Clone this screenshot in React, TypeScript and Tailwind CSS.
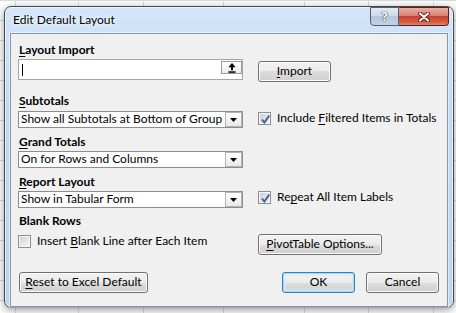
import React from "react";

type BtnProps = {
  children: React.ReactNode;
  className?: string;
  isDefault?: boolean;
};

function WinButton({ children, className = "", isDefault = false }: BtnProps) {
  return (
    <button
      type="button"
      className={`flex h-[21px] items-center justify-center rounded-[3px] border pb-[2px] text-[12px] leading-[15px] text-black bg-[linear-gradient(#f2f2f2_0%,#ebebeb_50%,#dddddd_50%,#cfcfcf_100%)] ${
        isDefault
          ? "border-[#3c7fb1] shadow-[inset_0_0_0_1px_#9edbf7,inset_0_0_3px_2px_#d4effc]"
          : "border-[#707070] shadow-[inset_0_0_0_1px_#fbfbfb]"
      } ${className}`}
    >
      {children}
    </button>
  );
}

function Select({ value }: { value: string }) {
  return (
    <div className="flex h-[17px] w-[225px] shrink-0 border border-[#8d8d8d] bg-white">
      <span className="-mt-[1px] flex-1 whitespace-nowrap pl-[2px] leading-[15px]">{value}</span>
      <div className="flex w-[17px] items-end justify-center border border-[#b3b3b3] bg-[linear-gradient(#ffffff,#e8e8e8)] pb-[4px]">
        <svg width="7" height="4" viewBox="0 0 7 4">
          <path d="M0 0H7L3.5 4Z" fill="#000" />
        </svg>
      </div>
    </div>
  );
}

function Check({ checked = false }: { checked?: boolean }) {
  return (
    <div className="relative flex h-[13px] w-[13px] shrink-0 items-center justify-center border border-[#8e8f8f] bg-[#f6f6f6]">
      <div
        className={`h-[9px] w-[9px] ${
          checked
            ? "bg-[linear-gradient(135deg,#c9d2dd,#eef1f5)]"
            : "bg-[linear-gradient(135deg,#cdd2d8,#f7f7f7)]"
        }`}
      />
      {checked && (
        <svg className="absolute left-[1px] top-[1px]" width="11" height="11" viewBox="0 0 11 11">
          <path d="M2 5.5L4.3 8.6L9.3 1.6" fill="none" stroke="#4a5f97" strokeWidth="1.9" />
        </svg>
      )}
    </div>
  );
}

export default function App() {
  return (
    <div className="relative h-[313px] w-[456px] overflow-hidden bg-white bg-[linear-gradient(#dadcdd_1px,transparent_1px)] bg-[length:100%_20px] pl-[4px] pt-[6px] font-['Lato','Noto_Sans',sans-serif] text-black">
      {/* sheet columns behind the dialog */}
      <div className="absolute bottom-0 left-[15px] top-0 w-px bg-[#dadcdd]" />
      <div className="absolute bottom-0 left-[78px] top-0 w-px bg-[#dadcdd]" />
      <div className="absolute bottom-0 left-[143px] top-0 w-px bg-[#dadcdd]" />
      <div className="absolute bottom-0 left-[223px] top-0 w-px bg-[#dadcdd]" />
      <div className="absolute bottom-0 left-[304px] top-0 w-px bg-[#dadcdd]" />
      <div className="absolute bottom-0 left-[368px] top-0 w-px bg-[#dadcdd]" />
      <div className="absolute bottom-0 left-[433px] top-0 w-px bg-[#dadcdd]" />

      <div className="relative z-10 flex h-[302px] w-[450px] flex-col rounded-[7px] border border-[#3f4a56] bg-[linear-gradient(180deg,#d4e6f8_0%,#c2d9f1_35%,#bcd4ed_100%)] shadow-[0_2px_8px_rgba(0,0,0,0.4),inset_0_0_0_1px_rgba(255,255,255,0.6)]">
        {/* title bar */}
        <div className="flex h-[26px] items-start pl-[8px] pr-[4px]">
          <span className="mt-[5px] text-[12px] leading-[15px] [text-shadow:0_0_6px_#fff,0_0_3px_#fff]">
            Edit Default Layout
          </span>
          <div className="ml-auto flex">
            <div className="flex h-[19px] w-[29px] items-center justify-center rounded-bl-[4px] border border-[#4d5f75] bg-[linear-gradient(#e3ebf4_0%,#cfdbe8_45%,#b6c7da_50%,#c3d3e5_100%)] pb-[1px] font-['Noto_Sans',sans-serif] text-[13px] font-bold leading-none text-white [text-shadow:0_0_1px_#2f4054,0_0_1px_#2f4054,0_0_1px_#2f4054]">
              ?
            </div>
            <div className="flex h-[19px] w-[50px] items-center justify-center rounded-br-[4px] border border-l-0 border-[#5e1f17] bg-[linear-gradient(#eab0a3_0%,#dc8171_45%,#c8432f_50%,#d45a43_80%,#e2846c_100%)]">
              <svg width="12" height="10" viewBox="0 0 12 10">
                <path d="M2 1.5L10 8.5M10 1.5L2 8.5" stroke="#5a1a12" strokeWidth="4" strokeLinecap="round" />
                <path d="M2 1.5L10 8.5M10 1.5L2 8.5" stroke="#ffffff" strokeWidth="2.2" strokeLinecap="round" />
              </svg>
            </div>
          </div>
        </div>

        {/* client area */}
        <div className="mx-[5px] flex-1 border border-[#8497ac] bg-[#f0f0f0] pl-[7px] pr-[8px] text-[12px] leading-[15px] shadow-[0_0_0_1px_rgba(255,255,255,0.5)]">
          <div className="ml-[1px] mt-[8px] font-bold">
            <u className="underline-offset-2">L</u>ayout Import
          </div>
          <div className="mt-[2px] flex items-start gap-[15px]">
            <div className="flex h-[21px] w-[225px] shrink-0 border border-[#a6a6a6] bg-white">
              <div className="ml-[3px] mt-[4px] h-[12px] w-px bg-black" />
              <div className="ml-auto mt-[1px] flex h-[13px] w-[21px] items-center justify-center border border-[#9c9c9c] bg-[linear-gradient(#ffffff,#ececec)]">
                <svg width="8" height="10" viewBox="0 0 8 10">
                  <path d="M4 0L7.6 4.2H0.4Z" fill="#000" />
                  <rect x="3" y="4" width="2" height="3.2" fill="#000" />
                  <rect x="0.5" y="8.3" width="7" height="1.5" fill="#000" />
                </svg>
              </div>
            </div>
            <WinButton className="mt-[2px] w-[73px]">
              <span><u className="underline-offset-2">I</u>mport</span>
            </WinButton>
          </div>

          <div className="ml-[1px] mt-[11px] font-bold">
            <u className="underline-offset-2">S</u>ubtotals
          </div>
          <div className="mt-[3px] flex items-start gap-[15px]">
            <Select value="Show all Subtotals at Bottom of Group" />
            <div className="mt-[1px] flex items-start gap-[6px]">
              <Check checked />
              <span className="-mt-[2px] whitespace-nowrap">
                Include <u className="underline-offset-2">F</u>iltered Items in Totals
              </span>
            </div>
          </div>

          <div className="ml-[1px] mt-[6px] font-bold">
            <u className="underline-offset-2">G</u>rand Totals
          </div>
          <div className="mt-[2px] flex">
            <Select value="On for Rows and Columns" />
          </div>

          <div className="ml-[1px] mt-[6px] font-bold">
            <u className="underline-offset-2">R</u>eport Layout
          </div>
          <div className="mt-[2px] flex items-start gap-[15px]">
            <Select value="Show in Tabular Form" />
            <div className="mt-[0px] flex items-start gap-[6px]">
              <Check checked />
              <span className="-mt-[2px] whitespace-nowrap">
                Re<u className="underline-offset-2">p</u>eat All Item Labels
              </span>
            </div>
          </div>

          <div className="ml-[1px] mt-[5px] font-bold">Blank Rows</div>
          <div className="mt-[6px] flex items-start gap-[15px]">
            <div className="mt-[1px] flex w-[225px] shrink-0 items-start gap-[6px]">
              <Check />
              <span className="-mt-[2px] whitespace-nowrap">
                Insert <u className="underline-offset-2">B</u>lank Line after Each Item
              </span>
            </div>
            <WinButton className="w-[124px]">
              <span><u className="underline-offset-2">P</u>ivotTable Options...</span>
            </WinButton>
          </div>

          <div className="mt-[17px] flex items-start">
            <WinButton className="ml-[1px] w-[129px]">
              <span><u className="underline-offset-2">R</u>eset to Excel Default</span>
            </WinButton>
            <div className="ml-auto flex gap-[11px]">
              <WinButton isDefault className="w-[73px]">OK</WinButton>
              <WinButton className="w-[73px]">Cancel</WinButton>
            </div>
          </div>
        </div>
      </div>
    </div>
  );
}
